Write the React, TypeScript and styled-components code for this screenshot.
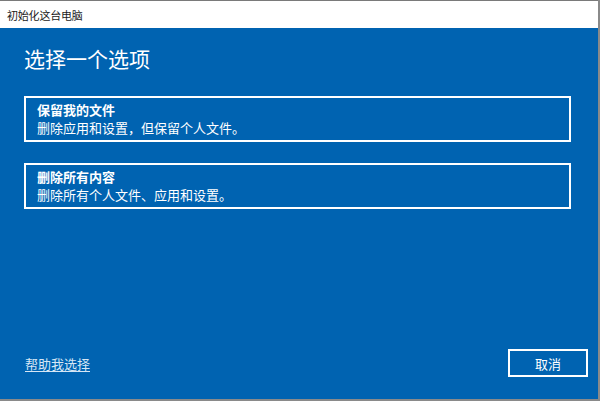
import styled, { createGlobalStyle } from 'styled-components';

const GlobalStyle = createGlobalStyle`
  html, body {
    margin: 0;
    padding: 0;
    background: #8a8a8a;
    font-family: "Noto Sans CJK SC", "Noto Sans", sans-serif;
  }
`;

type Option = { title: string; desc: string; };

const OPTIONS: Option[] = [
  { title: '保留我的文件', desc: '删除应用和设置，但保留个人文件。' },
  { title: '删除所有内容', desc: '删除所有个人文件、应用和设置。' }
];

const Window = styled.div`
  width: 598px;
  height: 399px;
  border-top: 1px solid #7a7a7a;
  display: flex;
  flex-direction: column;
  box-sizing: border-box;
`;

const TitleBar = styled.div`
  height: 27px;
  flex-shrink: 0;
  display: flex;
  align-items: center;
  padding-left: 7px;
  background: #ffffff;
  color: #1a1a1a;
  font-size: 11px;
  letter-spacing: -0.2px;
`;

const Body = styled.div`
  flex: 1;
  display: flex;
  flex-direction: column;
  background: #0063b1;
  padding: 16px 10px 22px 24px;
  color: #ffffff;
`;

const Heading = styled.h1`
  margin: 0 0 24px;
  font-size: 21px;
  font-weight: 400;
  line-height: 28px;
`;

const OptionList = styled.div`
  display: flex;
  flex-direction: column;
  gap: 21px;
  width: 547px;
`;

const OptionCard = styled.button`
  display: flex;
  flex-direction: column;
  align-items: flex-start;
  height: 46px;
  box-sizing: border-box;
  padding: 3px 11px 0;
  background: transparent;
  border: 2px solid #ffffff;
  color: #ffffff;
  font-family: inherit;
  text-align: left;
  cursor: pointer;
`;

const OptionTitle = styled.span`
  font-size: 13px;
  font-weight: 700;
  line-height: 18px;
`;

const OptionDesc = styled.span`
  font-size: 13px;
  line-height: 18px;
`;

const Footer = styled.div`
  margin-top: auto;
  display: flex;
  align-items: center;
  justify-content: space-between;
  padding-left: 1px;
`;

const HelpLink = styled.a`
  color: #d6e6f5;
  font-size: 13px;
  text-decoration: underline;
  text-underline-offset: 2px;
  cursor: pointer;
`;

const CancelButton = styled.button`
  width: 80px;
  height: 28px;
  background: transparent;
  border: 2px solid #ffffff;
  color: #ffffff;
  font-family: inherit;
  font-size: 13px;
  padding: 0;
  cursor: pointer;
`;

const App = () => (
  <>
    <GlobalStyle />
    <Window>
      <TitleBar>初始化这台电脑</TitleBar>
      <Body>
        <Heading>选择一个选项</Heading>
        <OptionList>
          {OPTIONS.map((opt) => (
            <OptionCard key={opt.title}>
              <OptionTitle>{opt.title}</OptionTitle>
              <OptionDesc>{opt.desc}</OptionDesc>
            </OptionCard>
          ))}
        </OptionList>
        <Footer>
          <HelpLink>帮助我选择</HelpLink>
          <CancelButton>取消</CancelButton>
        </Footer>
      </Body>
    </Window>
  </>
);

export default App;
